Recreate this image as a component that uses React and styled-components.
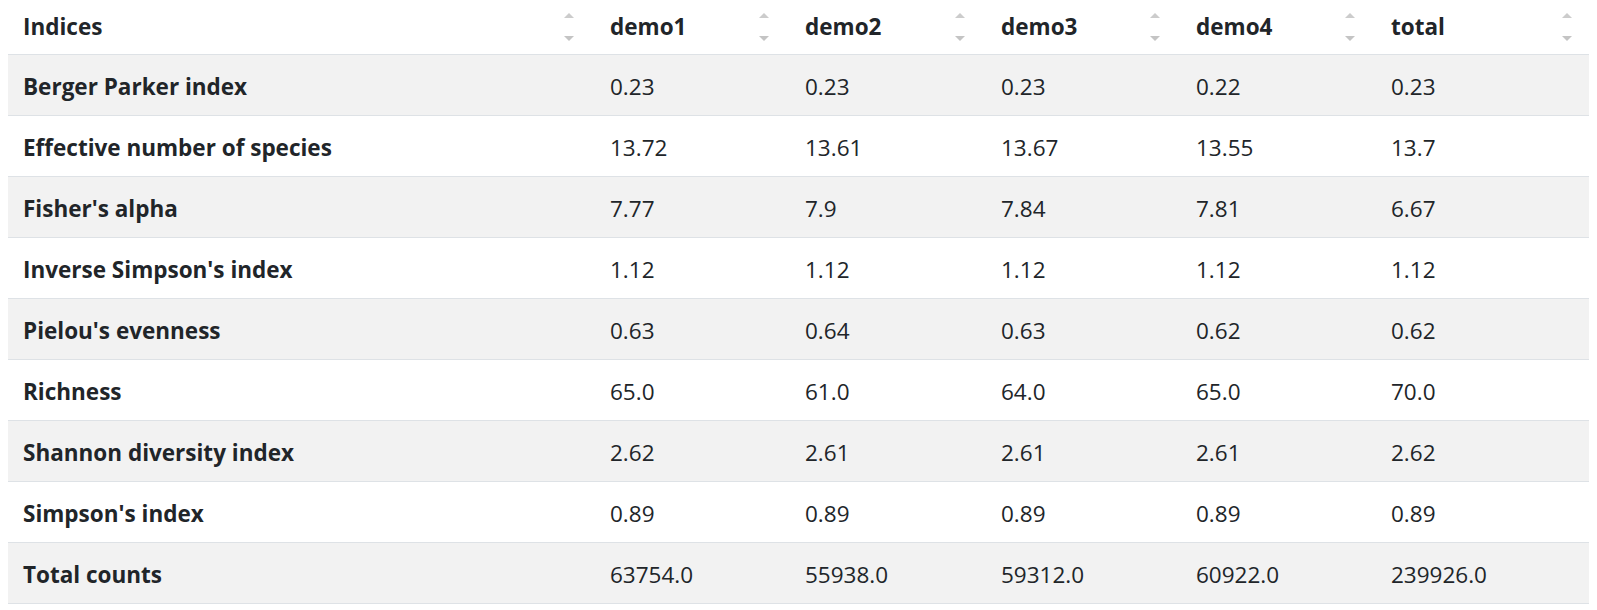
import * as React from 'react';
import styled, { createGlobalStyle } from 'styled-components';

const GlobalStyle = createGlobalStyle`
  body {
    margin: 0 8px;
    background: #fff;
    color: #212529;
    font-family: "Open Sans", "Noto Sans", "Liberation Sans", sans-serif;
    font-size: 22.5px;
  }
`;

const columns = ['Indices', 'demo1', 'demo2', 'demo3', 'demo4', 'total'];
const widths = [587, 195, 196, 195, 195, 217];

const rows = [
  ['Berger Parker index', '0.23', '0.23', '0.23', '0.22', '0.23'],
  ['Effective number of species', '13.72', '13.61', '13.67', '13.55', '13.7'],
  ["Fisher's alpha", '7.77', '7.9', '7.84', '7.81', '6.67'],
  ["Inverse Simpson's index", '1.12', '1.12', '1.12', '1.12', '1.12'],
  ["Pielou's evenness", '0.63', '0.64', '0.63', '0.62', '0.62'],
  ['Richness', '65.0', '61.0', '64.0', '65.0', '70.0'],
  ['Shannon diversity index', '2.62', '2.61', '2.61', '2.61', '2.62'],
  ["Simpson's index", '0.89', '0.89', '0.89', '0.89', '0.89'],
  ['Total counts', '63754.0', '55938.0', '59312.0', '60922.0', '239926.0'],
];

const Table = styled.table`
  width: 1585px;
  table-layout: fixed;
  border-collapse: collapse;
  line-height: 30px;
`;

const HeadCell = styled.th`
  position: relative;
  text-align: left;
  font-weight: 700;
  padding: 12px 15px 12px;
  border-bottom: 1px solid #dee2e6;
  white-space: nowrap;
`;

const SortIcons = styled.span`
  position: absolute;
  right: 21px;
  top: 13px;
  display: flex;
  flex-direction: column;
  gap: 18px;
`;

const Caret = styled.span`
  width: 0;
  height: 0;
  border-left: 5.5px solid transparent;
  border-right: 5.5px solid transparent;
  ${(p) =>
    p.$down
      ? 'border-top: 5px solid #c4c4c4;'
      : 'border-bottom: 5px solid #cccccc;'}
`;

const Row = styled.tr`
  background: ${(p) => (p.$striped ? '#f2f2f2' : '#fff')};
`;

const Cell = styled.td`
  padding: 17px 15px 13px;
  border-bottom: 1px solid #dee2e6;
  font-weight: ${(p) => (p.$label ? 700 : 400)};
  white-space: nowrap;
`;

export default function App() {
  return (
    <>
      <GlobalStyle />
      <Table>
        <colgroup>
          {widths.map((w, i) => (
            <col key={i} style={{ width: w }} />
          ))}
        </colgroup>
        <thead>
          <tr>
            {columns.map((c) => (
              <HeadCell key={c}>
                {c}
                <SortIcons aria-hidden>
                  <Caret />
                  <Caret $down />
                </SortIcons>
              </HeadCell>
            ))}
          </tr>
        </thead>
        <tbody>
          {rows.map((r, i) => (
            <Row key={r[0]} $striped={i % 2 === 0}>
              {r.map((v, j) => (
                <Cell key={j} $label={j === 0}>
                  {v}
                </Cell>
              ))}
            </Row>
          ))}
        </tbody>
      </Table>
    </>
  );
}
